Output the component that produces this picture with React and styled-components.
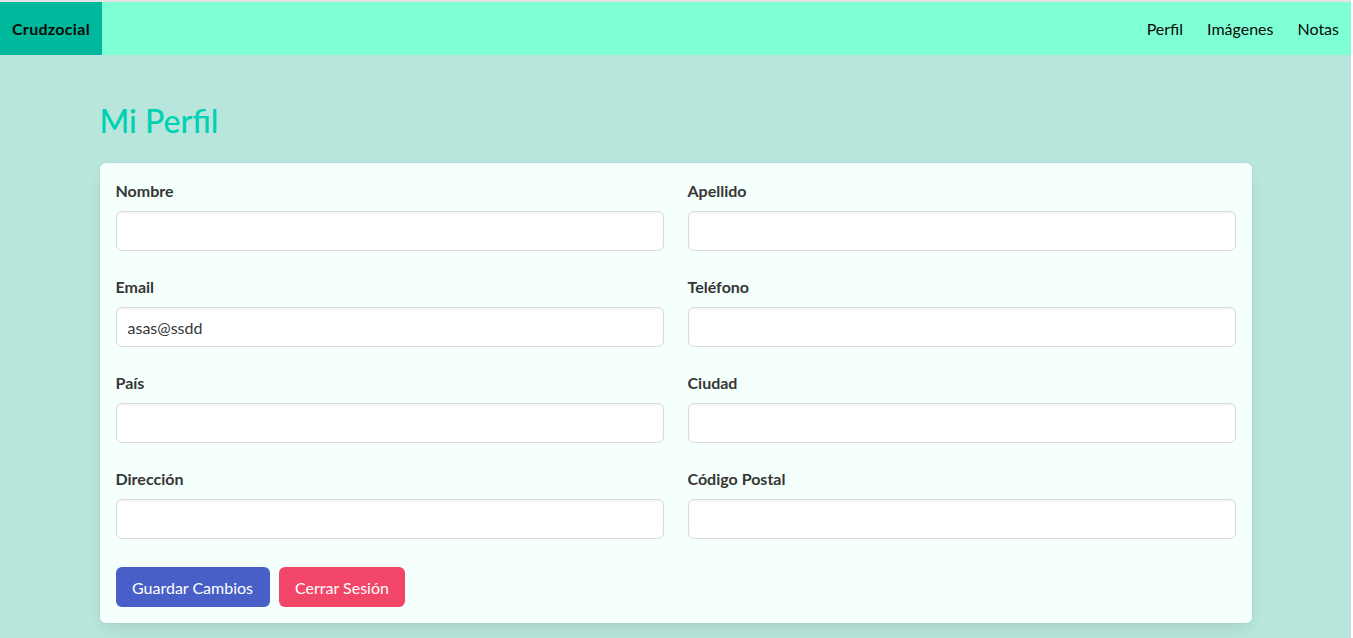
import styled, { createGlobalStyle } from "styled-components";

const Global = createGlobalStyle`
  html, body {
    margin: 0;
    padding: 0;
    background: #fff;
  }
  body {
    font-family: Lato, "Noto Sans", sans-serif;
    font-size: 16px;
    color: #4a4a4a;
  }
`

const Page = styled.div`
  margin-right: 2px;
  border-top: 2px solid #e3e3e3;
  background-color: #b8e6dc;
  min-height: 636px;
`

const Navbar = styled.nav`
  display: flex;
  align-items: stretch;
  justify-content: space-between;
  min-height: 53px;
  background-color: #7fffd4;
`

const Brand = styled.a`
  display: flex;
  align-items: center;
  padding: 0 12px;
  background-color: #00b89c;
  color: #0a0a0a;
  font-weight: 700;
  font-size: 16px;
  letter-spacing: 0.3px;
`

const Menu = styled.div`
  display: flex;
  align-items: center;
`

const NavItem = styled.a`
  padding: 0 12px;
  color: #0a0a0a;
  font-size: 16px;
`

const Section = styled.section`
  padding: 48px 0 16px;
`

const Container = styled.div`
  width: 1152px;
  margin: 0 auto;
`

const Title = styled.h1`
  margin: 0 0 24px;
  font-size: 32px;
  line-height: 36px;
  font-weight: 500;
  color: #00d1b2;
`

const Box = styled.div`
  background-color: #f5fffb;
  border-radius: 6px;
  padding: 16px;
  box-shadow: 0 8px 16px -4px rgba(10, 10, 10, 0.1), 0 0 0 1px rgba(10, 10, 10, 0.02);
`

const Grid = styled.div`
  display: grid;
  grid-template-columns: 1fr 1fr;
  column-gap: 24px;
  row-gap: 24px;
`

const Field = styled.div`
  display: flex;
  flex-direction: column;
`

const Label = styled.label`
  font-weight: 700;
  font-size: 16px;
  line-height: 24px;
  color: #363636;
  margin-bottom: 8px;
`

const Input = styled.input`
  box-sizing: border-box;
  height: 40px;
  width: 100%;
  padding: 0 11px;
  border: 1px solid #dbdbdb;
  border-radius: 6px;
  background: #fff;
  font-family: inherit;
  font-size: 16px;
  color: #363636;
  box-shadow: inset 0 1px 2px rgba(10, 10, 10, 0.05);
  outline: none;
`

const Buttons = styled.div`
  display: flex;
  gap: 9px;
  margin-top: 28px;
`

const Button = styled.button`
  height: 40px;
  padding: 0 16.5px;
  border: none;
  border-radius: 6px;
  background-color: ${p => (p.$danger ? "#f14668" : "#485fc7")};
  color: #fff;
  font-family: inherit;
  font-size: 16px;
  cursor: pointer;
`

const fields = [
  ["Nombre", ""],
  ["Apellido", ""],
  ["Email", "asas@ssdd"],
  ["Teléfono", ""],
  ["País", ""],
  ["Ciudad", ""],
  ["Dirección", ""],
  ["Código Postal", ""],
]

export default function App() {
  return (
    <Page>
      <Global />
      <Navbar>
        <Brand>Crudzocial</Brand>
        <Menu>
          <NavItem>Perfil</NavItem>
          <NavItem>Imágenes</NavItem>
          <NavItem>Notas</NavItem>
        </Menu>
      </Navbar>
      <Section>
        <Container>
          <Title>Mi Perfil</Title>
          <Box>
            <Grid>
              {fields.map(([label, value]) => (
                <Field key={label}>
                  <Label>{label}</Label>
                  <Input defaultValue={value} />
                </Field>
              ))}
            </Grid>
            <Buttons>
              <Button>Guardar Cambios</Button>
              <Button $danger>Cerrar Sesión</Button>
            </Buttons>
          </Box>
        </Container>
      </Section>
    </Page>
  )
}
